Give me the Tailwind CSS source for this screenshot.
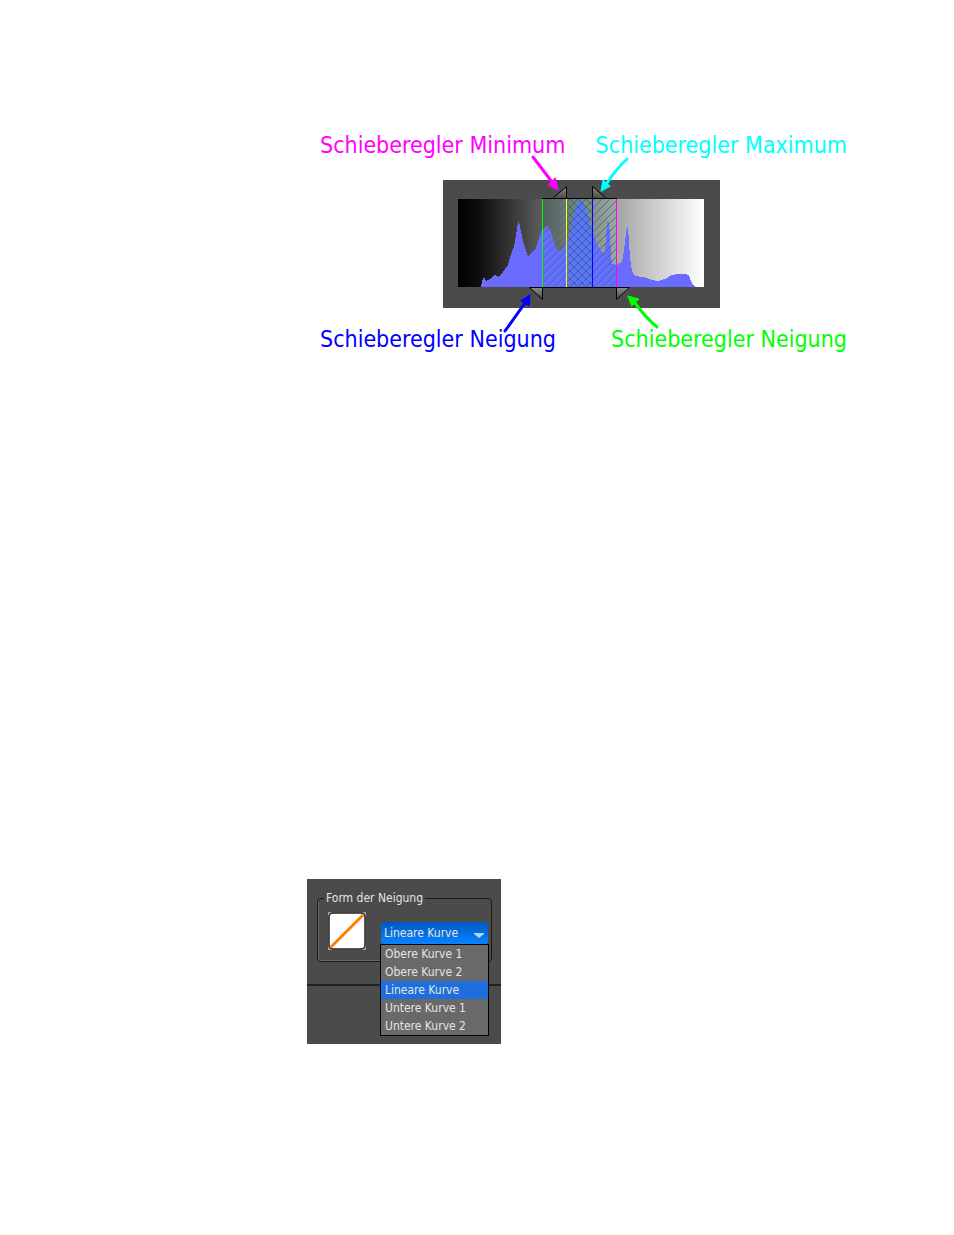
<!DOCTYPE html>
<html lang="de">
<head>
    <meta charset="UTF-8">
    <meta name="viewport" content="width=device-width, initial-scale=1.0">
    <title>Schieberegler und Form der Neigung</title>
    <script src="https://cdn.jsdelivr.net/npm/@tailwindcss/browser@4"></script>
</head>
<body class="bg-white font-['DejaVu_Sans_Condensed','DejaVu_Sans',sans-serif]">
    <main class="flex flex-col items-start pt-[129px] pb-16 pl-[307px]">
        <!-- Histogramm mit Beschriftungen -->
        <figure class="relative ml-[13px] w-[527px] text-[23px] leading-8 whitespace-nowrap">
            <div class="flex justify-between">
                <span class="text-[#ff00ff]">Schieberegler Minimum</span>
                <span class="text-[#00ffff]">Schieberegler Maximum</span>
            </div>
            <div class="relative mt-[19px] ml-[123px] w-[277px] bg-[#4b4b4b]">
                <svg class="block w-full" viewBox="0 0 277 128" role="img" aria-label="Histogramm">
                    <defs>
                        <linearGradient id="gray">
                            <stop offset="0" stop-color="#000"/>
                            <stop offset=".08" stop-color="#0c0c0c"/>
                            <stop offset=".34" stop-color="#5c5c5c"/>
                            <stop offset=".6" stop-color="#999"/>
                            <stop offset="1" stop-color="#fff"/>
                        </linearGradient>
                        <pattern id="hatch" width="8" height="8" patternUnits="userSpaceOnUse">
                            <path d="M-1 9L9 -1M-1 1L1 -1M7 9L9 7" stroke="#008080" stroke-width=".8" fill="none"/>
                        </pattern>
                        <pattern id="cross" width="8" height="8" patternUnits="userSpaceOnUse">
                            <path d="M-1 9L9 -1M-1 1L1 -1M7 9L9 7M-1 -1L9 9M7 -1L9 1M-1 7L1 9" stroke="#008080" stroke-width=".9" fill="none"/>
                        </pattern>
                        <linearGradient id="knob" x2="0" y2="1">
                            <stop offset="0" stop-color="#8a8a8a"/>
                            <stop offset="1" stop-color="#484848"/>
                        </linearGradient>
                    </defs>
                    <g transform="translate(15 19)">
                        <rect width="246" height="88" fill="url(#gray)"/>
                        <path shape-rendering="crispEdges" fill="#6b6bff" d="M23 88L24 82 26 78 28 82 32 80 37 76 41 78 45 73 50 66 53 55 56 48 58 36 60 23 61 23 62 27 64 38 67 49 70 57 74 54 78 49 81 40 84 31 88 27 90 27 93 33 96 43 99 51 103 53 106 48 109 43 112 33 114 23 117 11 120 3 122 1 124 2 126 7 129 13 131 20 134 31 137 39 140 47 145 54 147 52 148 38 149 23 151 23 152 36 153 56 154 65 159 66 164 63 166 51 168 34 169 28 170 28 171 43 172 59 174 72 177 77 185 78 194 81 200 82 207 80 214 76 219 75 227 75 231 76 233 82 236 87 238 88Z"/>
                        <rect x="85" width="23" height="88" fill="url(#hatch)"/>
                        <rect x="109" width="25" height="88" fill="url(#cross)"/>
                        <rect x="135" width="23" height="88" fill="url(#hatch)"/>
                        <g shape-rendering="crispEdges">
                            <path d="M84 -.5H159M84 88.5H159" stroke="#000"/>
                            <path d="M84.5 0V88" stroke="#00ff00"/>
                            <path d="M108.5 0V88" stroke="#ffff00"/>
                            <path d="M134.5 0V88" stroke="#0000ff"/>
                            <path d="M158.5 0V88" stroke="#ff00ff"/>
                        </g>
                    </g>
                </svg>
                <button type="button" aria-label="Minimum" class="absolute left-[110px] top-[6px]">
                    <svg class="block" width="14" height="13" viewBox="0 0 14 13"><path d="M.5 12.5V11.5L13.5 .5V12.5Z" fill="url(#knob)" stroke="#000"/></svg>
                </button>
                <button type="button" aria-label="Maximum" class="absolute left-[149px] top-[6px]">
                    <svg class="block" width="14" height="13" viewBox="0 0 14 13"><path d="M.5 12.5V.5L13.5 11.5V12.5Z" fill="url(#knob)" stroke="#000"/></svg>
                </button>
                <button type="button" aria-label="Neigung links" class="absolute left-[86px] top-[107px]">
                    <svg class="block" width="14" height="13" viewBox="0 0 14 13"><path d="M.5 .5H13.5V12.5Z" fill="url(#knob)" stroke="#000"/></svg>
                </button>
                <button type="button" aria-label="Neigung rechts" class="absolute left-[173px] top-[107px]">
                    <svg class="block" width="14" height="13" viewBox="0 0 14 13"><path d="M.5 .5H13.5L.5 12.5Z" fill="url(#knob)" stroke="#000"/></svg>
                </button>
            </div>
            <div class="mt-[15px] flex justify-between">
                <span class="text-[#0000ff]">Schieberegler Neigung</span>
                <span class="text-[#00ff00]">Schieberegler Neigung</span>
            </div>
            <!-- Pfeile -->
            <svg class="pointer-events-none absolute inset-0" width="527" height="226" viewBox="0 -1 527 226" fill="none" stroke-width="3" stroke-linecap="round">
                <path d="M213 27L232 52" stroke="#ff00ff"/>
                <path d="M238 60L228 55 235 48Z" fill="#ff00ff" stroke="#ff00ff" stroke-width="1"/>
                <path d="M307 29Q297 38 287 53" stroke="#00ffff"/>
                <path d="M281 61L283 50 290 56Z" fill="#00ffff" stroke="#00ffff" stroke-width="1"/>
                <path d="M185 201L205 173" stroke="#0000ff"/>
                <path d="M210 165L209 176 201 171Z" fill="#0000ff" stroke="#0000ff" stroke-width="1"/>
                <path d="M337 197Q326 188 315 173" stroke="#00ff00"/>
                <path d="M308 166L319 169 312 176Z" fill="#00ff00" stroke="#00ff00" stroke-width="1"/>
            </svg>
        </figure>

        <!-- Auswahl der Kurvenform -->
        <section class="mt-[524px] w-[194px] bg-[#4b4b4b] pt-[11px] pb-[58px] text-[12px] leading-4 text-[#e4e4e4]">
            <fieldset class="mr-[9px] ml-[10px] rounded-[4px] border border-[#191919] pr-[3px] pb-[11px] pl-[6px] shadow-[inset_1px_-1px_0_#6a6a6a]">
                <legend class="px-[2px]">Form der Neigung</legend>
                <div class="flex items-start gap-[15px] pt-[6px] pl-1">
                    <svg class="shrink-0" width="38" height="38" viewBox="0 0 38 38" role="img" aria-label="Lineare Kurve">
                        <rect width="38" height="38" fill="#a0a0a0"/>
                        <rect x="1" y="1" width="36" height="36" rx="4" fill="#fff" stroke="#222" stroke-width="1.5"/>
                        <path d="M3 35L35 3" stroke="#ff8000" stroke-width="3"/>
                    </svg>
                    <div class="relative mt-[10px] w-[107px]">
                        <select aria-label="Form der Neigung" class="block h-[22px] w-full appearance-none rounded-[3px] bg-linear-to-b from-[#0058c4] to-[#0a84ff] pl-[3px]">
                            <option>Obere Kurve 1</option>
                            <option>Obere Kurve 2</option>
                            <option selected>Lineare Kurve</option>
                            <option>Untere Kurve 1</option>
                            <option>Untere Kurve 2</option>
                        </select>
                        <svg class="pointer-events-none absolute top-[11px] right-1" width="10" height="5" viewBox="0 0 10 5"><path d="M0 0H10V1L5 5 0 1Z" fill="#b9d4f4"/></svg>
                        <ul role="listbox" aria-label="Kurven" class="absolute top-[22px] -left-px w-[109px] border border-black bg-[#69696b] leading-[18px]">
                            <li role="option" class="pl-1">Obere Kurve 1</li>
                            <li role="option" class="pl-1">Obere Kurve 2</li>
                            <li role="option" aria-selected="true" class="bg-[#1e6fdc] pl-1">Lineare Kurve</li>
                            <li role="option" class="pl-1">Untere Kurve 1</li>
                            <li role="option" class="pl-1">Untere Kurve 2</li>
                        </ul>
                    </div>
                </div>
            </fieldset>
            <hr class="mt-[22px] border-t-2 border-[#202020]">
        </section>
    </main>
</body>
</html>
